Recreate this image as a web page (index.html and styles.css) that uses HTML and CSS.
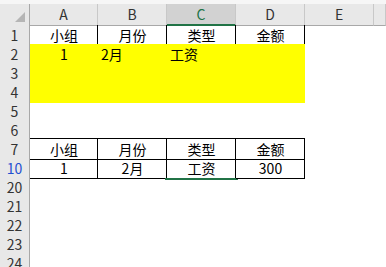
FILE: index.html
```html
<!DOCTYPE html>
<html lang="zh-CN">
<head>
    <meta charset="UTF-8">
    <title>工资表</title>
    <link rel="stylesheet" href="styles.css">
</head>
<body>

<div class="sheet">
    <!-- Cabecera de columnas -->
    <div class="row head">
        <div class="corner">
            <svg width="12" height="12" viewBox="0 0 12 12"><polygon points="11,1 11,11 1,11" fill="#b5b5b5"/></svg>
        </div>
        <div class="ch">A</div>
        <div class="ch">B</div>
        <div class="ch sel">C</div>
        <div class="ch">D</div>
        <div class="ch">E</div>
        <div class="ch"></div>
    </div>

    <div class="row">
        <div class="rh">1</div>
        <div class="c b">小组</div>
        <div class="c b">月份</div>
        <div class="c b">类型</div>
        <div class="c b">金额</div>
    </div>
    <div class="row">
        <div class="rh">2</div>
        <div class="c y">1</div>
        <div class="c y l">2月</div>
        <div class="c y l">工资</div>
        <div class="c y"></div>
    </div>
    <div class="row">
        <div class="rh">3</div>
        <div class="fill"></div>
    </div>
    <div class="row">
        <div class="rh">4</div>
        <div class="fill"></div>
    </div>
    <div class="row">
        <div class="rh">5</div>
    </div>
    <div class="row">
        <div class="rh">6</div>
    </div>

    <!-- Resultado del filtro -->
    <div class="row">
        <div class="rh">7</div>
        <div class="c b t">小组</div>
        <div class="c b t">月份</div>
        <div class="c b t">类型</div>
        <div class="c b t">金额</div>
    </div>
    <div class="row">
        <div class="rh filtered">10</div>
        <div class="c b">1</div>
        <div class="c b">2月</div>
        <div class="c b active">工资</div>
        <div class="c b">300</div>
    </div>

    <div class="row"><div class="rh">20</div></div>
    <div class="row"><div class="rh">21</div></div>
    <div class="row"><div class="rh">22</div></div>
    <div class="row"><div class="rh">23</div></div>
    <div class="row"><div class="rh">24</div></div>
</div>

</body>
</html>
```

FILE: styles.css
```css
body {
    margin: 0;
    background: #fff;
    font-family: "Noto Sans CJK SC", sans-serif;
    font-size: 14px;
    color: #000;
    overflow: hidden;
}
.sheet {
    width: 386px;
}
.row {
    display: grid;
    grid-template-columns: 30px 68px 69px 69px 69px 69px 1fr;
    height: 19px;
}
.head {
    height: 25px;
    background: #e8e8e8;
    border-top: 4px solid #f6f6f6;
    box-sizing: border-box;
}
.corner, .ch {
    box-sizing: border-box;
    border-right: 1px solid #c8c8c8;
    border-bottom: 1px solid #a8a8a8;
    text-align: center;
    line-height: 20px;
    color: #333;
}
.corner {
    border-right-color: #a8a8a8;
    display: flex;
    align-items: flex-end;
    justify-content: flex-end;
    padding: 0 3px 2px 0;
}
.corner svg {
    display: block;
}
.ch.sel {
    background: #d2d2d2;
    color: #217346;
    border-bottom: 2px solid #217346;
}
.rh {
    box-sizing: border-box;
    background: #e8e8e8;
    border-right: 1px solid #a8a8a8;
    border-bottom: 1px solid #d2d2d2;
    text-align: center;
    line-height: 20px;
    color: #333;
}
.rh.filtered {
    color: #1f4fd1;
}
.c {
    box-sizing: border-box;
    text-align: center;
    line-height: 20px;
    white-space: nowrap;
    position: relative;
}
.c.l {
    text-align: left;
    padding-left: 3px;
}
.c.y, .fill {
    background: #ffff00;
}
.fill {
    grid-column: 2 / 6;
}
.c.b {
    box-shadow: inset -1px -1px 0 #000;
}
.c.b.t {
    box-shadow: inset -1px -1px 0 #000, 0 -1px 0 #000;
}
.c.active::after {
    content: "";
    position: absolute;
    left: -2px;
    right: -2px;
    bottom: -1px;
    height: 2px;
    background: #217346;
}
```
